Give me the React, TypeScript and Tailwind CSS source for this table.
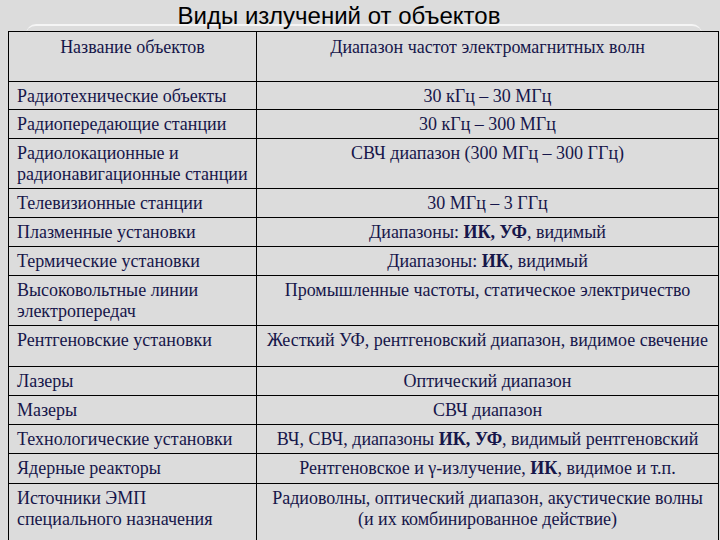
import React from 'react';

type Row = { name: React.ReactNode; range: React.ReactNode; h: number };

const rows: Row[] = [
  { name: 'Радиотехнические объекты', range: '30 кГц – 30 МГц', h: 28 },
  { name: 'Радиопередающие станции', range: '30 кГц – 300 МГц', h: 29 },
  {
    name: (
      <>
        Радиолокационные и
        <br />
        радионавигационные станции
      </>
    ),
    range: 'СВЧ диапазон (300 МГц – 300 ГГц)',
    h: 50,
  },
  { name: 'Телевизионные станции', range: '30 МГц – 3 ГГц', h: 29 },
  {
    name: 'Плазменные установки',
    range: (
      <>
        Диапазоны: <b className="font-semibold">ИК, УФ</b>, видимый
      </>
    ),
    h: 29,
  },
  {
    name: 'Термические установки',
    range: (
      <>
        Диапазоны: <b className="font-semibold">ИК</b>, видимый
      </>
    ),
    h: 29,
  },
  {
    name: (
      <>
        Высоковольтные линии
        <br />
        электропередач
      </>
    ),
    range: 'Промышленные частоты, статическое электричество',
    h: 50,
  },
  { name: 'Рентгеновские установки', range: 'Жесткий УФ, рентгеновский диапазон, видимое свечение', h: 41 },
  { name: 'Лазеры', range: 'Оптический диапазон', h: 29 },
  { name: 'Мазеры', range: 'СВЧ диапазон', h: 29 },
  {
    name: 'Технологические установки',
    range: (
      <>
        ВЧ, СВЧ, диапазоны <b className="font-semibold">ИК, УФ</b>, видимый рентгеновский
      </>
    ),
    h: 29,
  },
  {
    name: 'Ядерные реакторы',
    range: (
      <>
        Рентгеновское и γ-излучение, <b className="font-semibold">ИК</b>, видимое и т.п.
      </>
    ),
    h: 30,
  },
  {
    name: (
      <>
        Источники ЭМП
        <br />
        специального назначения
      </>
    ),
    range: (
      <>
        Радиоволны, оптический диапазон, акустические волны
        <br />
        (и их комбинированное действие)
      </>
    ),
    h: 60,
  },
];

export default function App() {
  return (
    <div className="w-[720px] h-[540px] overflow-hidden bg-[#dcdcdc] relative">
      {/* faint slide frame behind the table */}
      <div className="absolute left-[26px] top-[24px] w-[676px] h-[40px] rounded-t-[10px] border-t-2 border-white/70" />
      <div className="relative h-[31px] w-[678px] text-center font-[Arial] text-[24px] leading-[26px] pt-[3px] text-black">
        Виды излучений от объектов
      </div>
      <div className="relative pl-[8px]">
        <table className="w-[711px] border-collapse table-fixed font-[family-name:Liberation_Serif,serif] text-[18px] leading-[21px] text-[#16164a]">
          <colgroup>
            <col className="w-[248px]" />
            <col />
          </colgroup>
          <tbody>
            <tr className="h-[50px]">
              <td className="border border-black align-top pt-[5px] text-center">Название объектов</td>
              <td className="border border-black align-top pt-[5px] text-center">
                Диапазон частот электромагнитных волн
              </td>
            </tr>
            {rows.map((r, i) => (
              <tr key={i} style={{ height: r.h }}>
                <td className="border border-black align-top pt-[4px] px-[8px] whitespace-nowrap">{r.name}</td>
                <td className="border border-black align-top pt-[4px] text-center px-[2px] whitespace-nowrap">
                  {r.range}
                </td>
              </tr>
            ))}
          </tbody>
        </table>
      </div>
    </div>
  );
}
